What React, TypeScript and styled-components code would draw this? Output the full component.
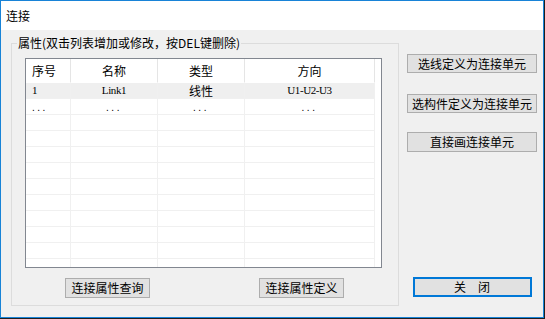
import styled, { createGlobalStyle } from "styled-components";

const GlobalStyle = createGlobalStyle`
    html, body {
        margin: 0;
        padding: 0;
        background: #1e1e1e;
    }
    * {
        box-sizing: border-box;
    }
`;

const cjk = `"Noto Sans CJK SC", "Microsoft YaHei", sans-serif`;

const Window = styled.div`
    width: 544px;
    height: 318px;
    border: 1px solid #1883d7;
    background: #f0f0f0;
    display: flex;
    flex-direction: column;
    font-family: ${cjk};
    font-size: 12px;
    color: #000;
`;

const TitleBar = styled.div`
    height: 29px;
    background: #fff;
    display: flex;
    align-items: center;
    padding-left: 5px;
    font-size: 12px;
`;

const Body = styled.div`
    flex: 1;
    display: flex;
    padding-left: 10px;
`;

const GroupBox = styled.div`
    position: relative;
    margin-top: 13px;
    width: 388px;
    height: 263px;
    border: 1px solid #dcdcdc;
    padding: 14px 16px 0 13px;
    display: flex;
    flex-direction: column;
`;

const Legend = styled.div`
    position: absolute;
    top: -9px;
    left: 5px;
    padding: 0 1px;
    background: #f0f0f0;
    line-height: 16px;
    white-space: nowrap;
`;

const List = styled.div`
    width: 357px;
    height: 210px;
    border: 1px solid #828790;
    background: #fff;
    overflow: hidden;
`;

const Row = styled.div<{ $head?: boolean; $selected?: boolean }>`
    display: grid;
    grid-template-columns: 45px 87px 87px 130px;
    height: ${(p) => (p.$head ? "24px" : "16px")};
    background: ${(p) => (p.$selected ? "#efefef" : "transparent")};
    width: 349px;
`;

const Cell = styled.div<{ $head?: boolean; $left?: boolean; $mono?: boolean }>`
    border-right: 1px solid ${(p) => (p.$head ? "#e5e5e5" : "#f0f0f0")};
    border-bottom: 1px solid ${(p) => (p.$head ? "transparent" : "#f0f0f0")};
    display: flex;
    align-items: center;
    justify-content: ${(p) => (p.$left ? "flex-start" : "center")};
    padding-left: ${(p) => (p.$left ? "6px" : "0")};
    font-family: ${(p) => (p.$mono ? `"Liberation Serif", serif` : cjk)};
    font-size: ${(p) => (p.$mono ? "11px" : "12px")};
    letter-spacing: ${(p) => (p.$mono ? "-0.4px" : "0")};
    line-height: 1;
    white-space: nowrap;
`;

const Dots = styled.span`
    font-family: "Liberation Sans", sans-serif;
    font-size: 10px;
    letter-spacing: 2.5px;
    margin-top: 3px;
`;

const BottomBar = styled.div`
    display: flex;
    gap: 109px;
    padding-left: 40px;
    margin-top: 10px;
`;

const Button = styled.button<{ $w: number; $h?: number; $mt?: number; $default?: boolean }>`
    width: ${(p) => p.$w}px;
    height: ${(p) => p.$h ?? 20}px;
    margin-top: ${(p) => p.$mt ?? 0}px;
    padding: 0;
    background: #e1e1e1;
    border: ${(p) => (p.$default ? "2px solid #0078d7" : "1px solid #adadad")};
    border-radius: 0;
    font-family: ${cjk};
    font-size: 12px;
    line-height: 1;
    color: #000;
    white-space: nowrap;
    display: flex;
    align-items: center;
    justify-content: center;
`;

const SideColumn = styled.div`
    margin-left: 8px;
    width: 130px;
    display: flex;
    flex-direction: column;
    align-items: center;
    padding-bottom: 20px;
`;

const Spacer = styled.div`
    flex: 1;
`;

export default function App() {
    const emptyRows = Array.from({ length: 10 });

    return <>
        <GlobalStyle />
        <Window>
            <TitleBar>连接</TitleBar>
            <Body>
                <GroupBox>
                    <Legend>属性(双击列表增加或修改，按DEL键删除)</Legend>
                    <List>
                        <Row $head>
                            <Cell $head $left>序号</Cell>
                            <Cell $head>名称</Cell>
                            <Cell $head>类型</Cell>
                            <Cell $head>方向</Cell>
                        </Row>
                        <Row $selected>
                            <Cell $left $mono>1</Cell>
                            <Cell $mono>Link1</Cell>
                            <Cell>线性</Cell>
                            <Cell $mono>U1-U2-U3</Cell>
                        </Row>
                        <Row>
                            <Cell $left><Dots>...</Dots></Cell>
                            <Cell><Dots>...</Dots></Cell>
                            <Cell><Dots>...</Dots></Cell>
                            <Cell><Dots>...</Dots></Cell>
                        </Row>
                        {emptyRows.map((_, i) => (
                            <Row key={i}>
                                <Cell />
                                <Cell />
                                <Cell />
                                <Cell />
                            </Row>
                        ))}
                    </List>
                    <BottomBar>
                        <Button $w={85}>连接属性查询</Button>
                        <Button $w={85}>连接属性定义</Button>
                    </BottomBar>
                </GroupBox>
                <SideColumn>
                    <Button $w={130} $h={19} $mt={24}>选线定义为连接单元</Button>
                    <Button $w={130} $h={19} $mt={21}>选构件定义为连接单元</Button>
                    <Button $w={130} $h={20} $mt={19}>直接画连接单元</Button>
                    <Spacer />
                    <Button $w={119} $default>关　闭</Button>
                </SideColumn>
            </Body>
        </Window>
    </>;
}
